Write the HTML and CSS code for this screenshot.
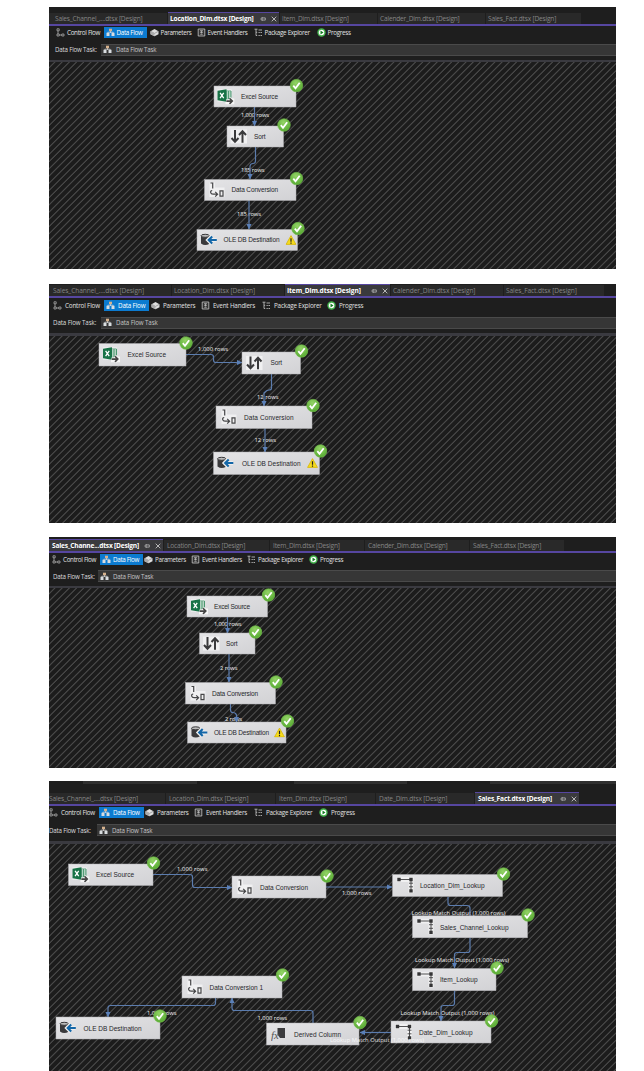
FILE: index.html
```html
<!DOCTYPE html>
<html lang="en">
<head>
<meta charset="utf-8">
<title>Data Flow designer</title>
<link rel="stylesheet" href="styles.css">
</head>
<body>
<svg class="defs" width="0" height="0" aria-hidden="true">
  <defs>
    <linearGradient id="face" x1="0" y1="0" x2="1" y2="1"><stop offset="0" stop-color="#e4e4e6"/><stop offset="1" stop-color="#d2d2d5"/></linearGradient>
    <radialGradient id="green" cx=".45" cy=".3" r=".75"><stop offset="0" stop-color="#93d366"/><stop offset="1" stop-color="#52a72f"/></radialGradient>
    <marker id="arrow" viewBox="0 0 6 6" refX="5.5" refY="3" markerWidth="5.5" markerHeight="5.5" markerUnits="userSpaceOnUse" orient="auto"><path d="M0 0.2L6 3L0 5.8z" fill="#5b80b8"/></marker>
    <symbol id="ok" viewBox="-7 -7 14 14"><circle r="6.3" fill="url(#green)" stroke="#74bd4c" stroke-width=".6"/><path d="M-3.200 .2L-1 2.8L3.200 -2.800" fill="none" stroke="#fff" stroke-width="1.8"/></symbol>
    <symbol id="warn" viewBox="0 0 10 9"><path d="M5 .5L9.5 8.5H.5z" fill="#f6dc1d" stroke="#d5b400" stroke-width=".7" stroke-linejoin="round"/><path d="M5 3v3M5 6.8v1" stroke="#222" stroke-width="1.1"/></symbol>
    <symbol id="excel" viewBox="0 0 18 16"><path d="M1 1h14v9h3v6H9v-3H1z" fill="#f6f6f6"/><path d="M9.5 2.5h5v8h-5z" fill="#fff" stroke="#2a8455" stroke-width=".8"/><path d="M9.5 4.5h5M9.5 6.5h5M9.5 8.5h5M12 2.5v8" stroke="#2a8455" stroke-width=".7"/><path d="M1 2.3L10 .8v12.4L1 11.8z" fill="#187347"/><path d="M3.6 4.3l3.6 5.4M7.2 4.3L3.6 9.7" stroke="#fff" stroke-width="1.3"/><path d="M9.5 12.6h6M13 9.8l2.8 2.8L13 15.4" stroke="#f6f6f6" stroke-width="3.4" fill="none"/><path d="M9.8 12.6h6M13 9.8l2.8 2.8L13 15.4" stroke="#444" stroke-width="1.6" fill="none"/></symbol>
    <symbol id="sort" viewBox="0 0 18 16"><path d="M.5 1h16.500v14H.5z" fill="#f0f0f1"/><path d="M5 1.500v11.500M1.500 9.500L5 13.200l3.500-3.700M12.500 14.300V3.200M9 6.500l3.500-3.700 3.500 3.700" stroke="#3a3a3c" stroke-width="2" fill="none"/></symbol>
    <symbol id="convert" viewBox="0 0 18 16"><path d="M.5 1H6v5h9.500v9.500H.5z" fill="#f0f0f1"/><path d="M1.500 1.500h2.200v5.500M3.200 9Q1.300 9.300 1.700 11.200Q2 12.700 4 12.700H8M6.200 10.300l2.400 2.400-2.400 2.400M11 9.300h3v5.400h-3z" stroke="#454547" stroke-width="1.200" fill="none"/></symbol>
    <symbol id="oledb" viewBox="0 0 18 16"><path d="M1 4.500v7.500Q5 15 9.500 12.300V4.500z" fill="#39393b"/><ellipse cx="5.200" cy="4.300" rx="4.200" ry="1.500" fill="#bbb" stroke="#39393b" stroke-width="1"/><path d="M7 8.500h9.500M12 4.700L8.200 8.500l3.800 3.800" stroke="#eee" stroke-width="4" fill="none"/><path d="M9 8.500h7.800M12.200 5L8.700 8.500l3.500 3.500" stroke="#1467a8" stroke-width="2.100" fill="none"/></symbol>
    <symbol id="lookup" viewBox="0 0 18 16"><path d="M0 0h17v16h-5V5H0z" fill="#f0f0f1"/><path d="M2 2.500h12.500v11.500M12.500 6.200h4M12.500 9.800h4" stroke="#404042" stroke-width=".9" fill="none"/><path d="M.8.8h3.400v3.400H.8zM12.800.8h3.400v3.400h-3.400zM12.800 12.200h3.400v3.400h-3.400z" fill="#343436"/></symbol>
    <symbol id="derived" viewBox="0 0 18 16"><path d="M6.500 1.500h7.500v10H9L6.500 8z" fill="#3c3c3e"/><text x="0" y="12" class="fx">fx</text></symbol>
    <symbol id="i-control" viewBox="0 0 9 9"><path d="M1 .8h2.200v2H1zM1 6h2.200v2H1zM5.800 6H8v2H5.800zM2 2.800V6M3.200 7h2.600" stroke="#b8b8b8" stroke-width=".7" fill="none"/></symbol>
    <symbol id="i-flow" viewBox="0 0 9 9"><path d="M4.500 2.500v2.500M1.800 6V4.200h5.400V6" stroke="#ddd" stroke-width=".7" fill="none"/><path d="M3 .7h3v2.500H3z" fill="#d7b28d"/><path d="M.5 4.800h3v3.200h-3zM5.500 4.800h3v3.200h-3z" fill="#d8dcdf"/></symbol>
    <symbol id="i-param" viewBox="0 0 9 9"><path d="M.5 3.200L4.500 1l4 2.200v3L4.500 8.300l-4-2.100z" fill="#dedede"/><path d="M.8 3.400l3.700 2 3.700-2" stroke="#777" stroke-width=".6" fill="none"/><path d="M4.500 5.400v2.900l-4-2.100v-3z" fill="#aaa"/></symbol>
    <symbol id="i-event" viewBox="0 0 9 9"><path d="M1.200 1h6.600v7H1.200z" fill="#333" stroke="#c8c8c8" stroke-width=".8"/><path d="M3 2.700h3M4.500 2.700v2.800M3 4.300h3M3.300 6.300h2.400" stroke="#c8c8c8" stroke-width=".7"/></symbol>
    <symbol id="i-package" viewBox="0 0 9 9"><path d="M.5 1.200h3M2 1.200v6.300h1.200M2 4.300h1.200M4.500 2h3.500M4.500 4.500h1.300M6.500 4.500H8M4.500 7.500h1.300M6.500 7.500H8" stroke="#b8b8b8" stroke-width=".9" fill="none"/></symbol>
    <symbol id="i-progress" viewBox="0 0 9 9"><circle cx="4.500" cy="4.500" r="3.500" fill="#fff" stroke="#43b34c" stroke-width="1.400"/><path d="M3.500 2.600L6.500 4.500l-3 1.900z" fill="#177c24"/></symbol>
    <symbol id="i-pin" viewBox="0 0 6 6"><path d="M.3 3h1.600M2 1v4M2 1.900h3.300v2.200H2" stroke="#c9c9c9" stroke-width=".7" fill="none"/></symbol>
    <symbol id="i-close" viewBox="0 0 6 6"><path d="M.7.7l4.600 4.600M5.300.7L.7 5.300" stroke="#d6d6d6" stroke-width=".8"/></symbol>
  </defs>
</svg>
<main class="page">

<section class="panel location">
  <nav class="tabs">
    <div class="tab">Sales_Channel_....dtsx [Design]</div>
    <div class="tab active"><span>Location_Dim.dtsx [Design]</span><svg><use href="#i-pin"/></svg><svg><use href="#i-close"/></svg></div>
    <div class="tab">Item_Dim.dtsx [Design]</div>
    <div class="tab">Calender_Dim.dtsx [Design]</div>
    <div class="tab">Sales_Fact.dtsx [Design]</div>
  </nav>
  <div class="toolbar">
    <div class="tool"><svg><use href="#i-control"/></svg>Control Flow</div>
    <div class="tool on"><svg><use href="#i-flow"/></svg>Data Flow</div>
    <div class="tool"><svg><use href="#i-param"/></svg>Parameters</div>
    <div class="tool"><svg><use href="#i-event"/></svg>Event Handlers</div>
    <div class="tool"><svg><use href="#i-package"/></svg>Package Explorer</div>
    <div class="tool"><svg><use href="#i-progress"/></svg>Progress</div>
  </div>
  <div class="task"><label>Data Flow Task:</label><div class="field"><svg><use href="#i-flow"/></svg>Data Flow Task</div></div>
  <div class="sep"></div>
  <svg class="canvas" viewBox="49 62 567 207">
    <g class="names">
      <text x="241" y="117.300" textLength="28">1,000 rows</text>
      <text x="241" y="171.800" textLength="23.500">185 rows</text>
      <text x="237" y="215.600" textLength="24">185 rows</text>
    </g>
    <g class="edges">
      <path d="M254.500 107V126"/><path d="M255.500 147V161Q255.500 163.500 253 163.500T250 166V179"/><path d="M249 200V229"/>
    </g>
    <g class="boxes">
      <rect x="214" y="86" width="82" height="21"/><rect x="227" y="126" width="56.500" height="21"/><rect x="204.500" y="179.500" width="91.500" height="21"/><rect x="197" y="229.500" width="100.500" height="21"/>
    </g>
    <g class="titles">
      <text x="241" y="99" textLength="37">Excel Source</text><text x="254" y="139" textLength="11.500">Sort</text><text x="231.500" y="192.300" textLength="46.500">Data Conversion</text><text x="223.500" y="242.300" textLength="56">OLE DB Destination</text>
    </g>
    <use href="#excel" x="216.500" y="88.500" width="18" height="16"/><use href="#sort" x="230" y="128.500" width="18" height="16"/><use href="#convert" x="209" y="181.500" width="18" height="16"/><use href="#oledb" x="200" y="231.500" width="18" height="16"/><use href="#warn" x="285.500" y="235" width="11" height="10"/>
    <use href="#ok" x="289.500" y="78.500" width="14" height="14"/><use href="#ok" x="277" y="118" width="14" height="14"/><use href="#ok" x="289.500" y="171.500" width="14" height="14"/><use href="#ok" x="291" y="221.500" width="14" height="14"/>
  </svg>
</section>

<section class="panel item">
  <nav class="tabs">
    <div class="tab">Sales_Channel_....dtsx [Design]</div>
    <div class="tab">Location_Dim.dtsx [Design]</div>
    <div class="tab active"><span>Item_Dim.dtsx [Design]</span><svg><use href="#i-pin"/></svg><svg><use href="#i-close"/></svg></div>
    <div class="tab">Calender_Dim.dtsx [Design]</div>
    <div class="tab">Sales_Fact.dtsx [Design]</div>
  </nav>
  <div class="toolbar">
    <div class="tool"><svg><use href="#i-control"/></svg>Control Flow</div>
    <div class="tool on"><svg><use href="#i-flow"/></svg>Data Flow</div>
    <div class="tool"><svg><use href="#i-param"/></svg>Parameters</div>
    <div class="tool"><svg><use href="#i-event"/></svg>Event Handlers</div>
    <div class="tool"><svg><use href="#i-package"/></svg>Package Explorer</div>
    <div class="tool"><svg><use href="#i-progress"/></svg>Progress</div>
  </div>
  <div class="task"><label>Data Flow Task:</label><div class="field"><svg><use href="#i-flow"/></svg>Data Flow Task</div></div>
  <div class="sep"></div>
  <svg class="canvas" viewBox="49 336 567 187">
    <g class="names">
      <text x="198" y="351.300" textLength="30">1,000 rows</text><text x="257" y="398.800" textLength="21.500">12 rows</text><text x="254.500" y="441.500" textLength="21.500">12 rows</text>
    </g>
    <g class="edges">
      <path d="M186 354.500H211Q213.500 354.500 213.500 357V360Q213.500 362.500 216 362.500H242"/><path d="M271.500 373V388Q271.500 390 269 390T264 393V406"/><path d="M265 428V452"/>
    </g>
    <g class="boxes">
      <rect x="99" y="343.500" width="87" height="22.500"/><rect x="242" y="352" width="58.500" height="22"/><rect x="216" y="406" width="96" height="22.500"/><rect x="213.500" y="452" width="106" height="22.500"/>
    </g>
    <g class="titles">
      <text x="127.500" y="357" textLength="38.500">Excel Source</text><text x="270.500" y="365.300" textLength="11.500">Sort</text><text x="244" y="419.800" textLength="49.500">Data Conversion</text><text x="242" y="465.800" textLength="58.500">OLE DB Destination</text>
    </g>
    <use href="#excel" x="102" y="346.500" width="18" height="16"/><use href="#sort" x="245.500" y="355" width="18" height="16"/><use href="#convert" x="221" y="408.500" width="18" height="16"/><use href="#oledb" x="216.500" y="454.500" width="18" height="16"/><use href="#warn" x="307" y="458" width="11" height="10"/>
    <use href="#ok" x="179" y="336" width="14" height="14"/><use href="#ok" x="294.500" y="344" width="14" height="14"/><use href="#ok" x="306" y="398.500" width="14" height="14"/><use href="#ok" x="313.500" y="444" width="14" height="14"/>
  </svg>
</section>

<section class="panel channel">
  <nav class="tabs">
    <div class="tab active"><span>Sales_Channe...dtsx [Design]</span><svg><use href="#i-pin"/></svg><svg><use href="#i-close"/></svg></div>
    <div class="tab">Location_Dim.dtsx [Design]</div>
    <div class="tab">Item_Dim.dtsx [Design]</div>
    <div class="tab">Calender_Dim.dtsx [Design]</div>
    <div class="tab">Sales_Fact.dtsx [Design]</div>
  </nav>
  <div class="toolbar">
    <div class="tool"><svg><use href="#i-control"/></svg>Control Flow</div>
    <div class="tool on"><svg><use href="#i-flow"/></svg>Data Flow</div>
    <div class="tool"><svg><use href="#i-param"/></svg>Parameters</div>
    <div class="tool"><svg><use href="#i-event"/></svg>Event Handlers</div>
    <div class="tool"><svg><use href="#i-package"/></svg>Package Explorer</div>
    <div class="tool"><svg><use href="#i-progress"/></svg>Progress</div>
  </div>
  <div class="task"><label>Data Flow Task:</label><div class="field"><svg><use href="#i-flow"/></svg>Data Flow Task</div></div>
  <div class="sep"></div>
  <svg class="canvas" viewBox="49 588 567 180">
    <g class="names">
      <text x="214" y="625.600" textLength="27.500">1,000 rows</text><text x="220" y="669.500" textLength="17.500">2 rows</text><text x="225" y="721.300" textLength="17">2 rows</text>
    </g>
    <g class="edges">
      <path d="M227.500 617V633"/><path d="M229 654V682"/><path d="M230.500 704V710Q230.500 712.500 233 712.500T236.500 715V722"/>
    </g>
    <g class="boxes">
      <rect x="187" y="596" width="80.500" height="21"/><rect x="199.500" y="633" width="55.500" height="21"/><rect x="185.500" y="682.500" width="90" height="21.500"/><rect x="187.500" y="722" width="98.500" height="21"/>
    </g>
    <g class="titles">
      <text x="214" y="608.800" textLength="36">Excel Source</text><text x="226" y="646" textLength="11.500">Sort</text><text x="212" y="695.800" textLength="46">Data Conversion</text><text x="214" y="735" textLength="55">OLE DB Destination</text>
    </g>
    <use href="#excel" x="190" y="598.500" width="18" height="16"/><use href="#sort" x="202.500" y="635.500" width="18" height="16"/><use href="#convert" x="190" y="685" width="18" height="16"/><use href="#oledb" x="190.500" y="724" width="18" height="16"/><use href="#warn" x="274" y="727.500" width="11" height="10"/>
    <use href="#ok" x="261.500" y="588" width="14" height="14"/><use href="#ok" x="248.500" y="625" width="14" height="14"/><use href="#ok" x="269" y="675" width="14" height="14"/><use href="#ok" x="280.500" y="714" width="14" height="14"/>
  </svg>
</section>

<section class="panel fact">
  <nav class="tabs">
    <div class="tab">Sales_Channel_....dtsx [Design]</div>
    <div class="tab">Location_Dim.dtsx [Design]</div>
    <div class="tab">Item_Dim.dtsx [Design]</div>
    <div class="tab">Date_Dim.dtsx [Design]</div>
    <div class="tab active"><span>Sales_Fact.dtsx [Design]</span><svg><use href="#i-pin"/></svg><svg><use href="#i-close"/></svg></div>
  </nav>
  <div class="toolbar">
    <div class="tool"><svg><use href="#i-control"/></svg>Control Flow</div>
    <div class="tool on"><svg><use href="#i-flow"/></svg>Data Flow</div>
    <div class="tool"><svg><use href="#i-param"/></svg>Parameters</div>
    <div class="tool"><svg><use href="#i-event"/></svg>Event Handlers</div>
    <div class="tool"><svg><use href="#i-package"/></svg>Package Explorer</div>
    <div class="tool"><svg><use href="#i-progress"/></svg>Progress</div>
  </div>
  <div class="task"><label>Data Flow Task:</label><div class="field"><svg><use href="#i-flow"/></svg>Data Flow Task</div></div>
  <div class="sep"></div>
  <svg class="canvas" viewBox="49 844 567 227">
    <g class="names">
      <text x="177" y="871.300" textLength="30.500">1,000 rows</text><text x="342" y="895.300" textLength="29.500">1,000 rows</text>
      <text x="411.500" y="914.500" textLength="94">Lookup Match Output (1,000 rows)</text><text x="415" y="961.500" textLength="94">Lookup Match Output (1,000 rows)</text><text x="400.500" y="1014.500" textLength="94">Lookup Match Output (1,000 rows)</text>
      <text x="257.500" y="1019.500" textLength="29.500">1,000 rows</text><text x="147" y="1014.500" textLength="29.500">1,000 rows</text>
    </g>
    <g class="edges">
      <path d="M153 874.500H190Q192.500 874.500 192.500 877V885Q192.500 887.500 195 887.500H232"/><path d="M326 887H392"/>
      <path class="plain" d="M448 897V903Q448 905.500 450.500 905.500H467Q470 905.500 470 908V916"/><path d="M470 938V950Q470 952.500 467.500 952.500H457Q454.500 952.500 454.500 955V968"/>
      <path d="M454.500 991V1003Q454.500 1005.500 452 1005.500H443.500Q441 1005.500 441 1008V1021"/><path d="M391 1032.500H360"/>
      <path d="M313 1023V1013Q313 1010.500 310.500 1010.500H234.500Q232 1010.500 232 1008V998"/><path d="M215.500 998V1003Q215.500 1005.500 213 1005.500H110.500Q108 1005.500 108 1008V1017"/>
    </g>
    <g class="boxes">
      <rect x="68.500" y="864" width="84.500" height="21.500"/><rect x="232" y="876" width="94" height="22"/><rect x="392.500" y="874.500" width="110" height="22"/><rect x="412.500" y="915.800" width="115" height="22"/><rect x="412.500" y="968.500" width="83.500" height="22.200"/><rect x="391" y="1021" width="100" height="22"/><rect x="266.500" y="1023" width="92.500" height="22"/><rect x="182" y="976" width="100" height="22"/><rect x="56" y="1017" width="104" height="22"/>
    </g>
    <g class="titles">
      <text x="96" y="877" textLength="38">Excel Source</text><text x="260" y="889.800" textLength="48">Data Conversion</text><text x="420" y="887.500" textLength="64.500">Location_Dim_Lookup</text><text x="440" y="929.500" textLength="68.500">Sales_Channel_Lookup</text><text x="440" y="982.300" textLength="37.500">Item_Lookup</text><text x="419" y="1034.500" textLength="53.500">Date_Dim_Lookup</text><text x="294" y="1036.500" textLength="47">Derived Column</text><text x="209.500" y="989.500" textLength="53.500">Data Conversion 1</text><text x="83.500" y="1030.500" textLength="58">OLE DB Destination</text>
    </g>
    <use href="#excel" x="71.500" y="866.500" width="18" height="16"/><use href="#convert" x="237" y="878.500" width="18" height="16"/><use href="#lookup" x="396.500" y="877" width="18" height="16"/><use href="#lookup" x="416.500" y="918.500" width="18" height="16"/><use href="#lookup" x="416.500" y="971.500" width="18" height="16"/><use href="#lookup" x="395" y="1024" width="18" height="16"/><use href="#derived" x="271" y="1026.500" width="18" height="16"/><use href="#convert" x="187" y="978.500" width="18" height="16"/><use href="#oledb" x="59" y="1019.500" width="18" height="16"/>
    <g class="names over"><text x="330" y="1041.500" textLength="94">Lookup Match Output (1,000 rows)</text></g>
    <use href="#ok" x="146.500" y="856" width="14" height="14"/><use href="#ok" x="320" y="869" width="14" height="14"/><use href="#ok" x="496.500" y="867" width="14" height="14"/><use href="#ok" x="521" y="908" width="14" height="14"/><use href="#ok" x="490" y="961" width="14" height="14"/><use href="#ok" x="484.500" y="1014" width="14" height="14"/><use href="#ok" x="353" y="1015.500" width="14" height="14"/><use href="#ok" x="275.500" y="968" width="14" height="14"/><use href="#ok" x="153" y="1009" width="14" height="14"/>
  </svg>
</section>
</main>
</body>
</html>
```
FILE: styles.css
```css
* { box-sizing: border-box; }
body { margin: 0; background: #fff; font-family: "Open Sans", "Noto Sans", sans-serif; }
.defs { position: absolute; }
.page { width: 644px; height: 1071px; overflow: hidden; padding: 7px 28px 0 49px; }
.panel { display: grid; width: 567px; background: #1e1e1e; overflow: hidden; }
.location { grid-template-rows: 19px 13px 21px 2px 207px; margin-bottom: 15px; }
.item { grid-template-rows: 14px 14px 21px 3px 187px; margin-bottom: 14px; }
.channel { grid-template-rows: 16px 13px 20px 2px 180px; margin-bottom: 13px; }
.fact { grid-template-rows: 25px 13px 22px 3px 227px; }

.tabs { display: grid; align-items: end; border-bottom: 2px solid #5646a0; column-gap: 1px; }
.location .tabs { grid-template-columns: 118px 111px 97px 107px 95px; --tab-pad: 2px; }
.item .tabs { grid-template-columns: 122px 112px 105px 112px 100px; --tab-pad: 2px; }
.channel .tabs { grid-template-columns: 114px 105px 94px 104px 94px; --tab-pad: 3px; }
.fact .tabs { grid-template-columns: 116px 109px 99px 98px 104px; --tab-pad: 3px; }
.fact .tabs {
  background: linear-gradient(90deg, transparent 34px, #303030 34px, #303030 148px, transparent 148px, transparent 245px, #303030 245px, #303030 358px, transparent 358px, transparent 441px, #303030 441px) 0 0 / 100% 3px no-repeat;
}
.tab { display: flex; align-items: center; height: 11px; padding-left: var(--tab-pad); background: #292929; color: #858585; font-size: 6.6px; letter-spacing: -0.2px; line-height: 11px; white-space: nowrap; }
.location .tab:first-child { padding-left: 6px; }
.item .tab:first-child { padding-left: 4px; }
.fact .tab:first-child { padding-left: 0; }
.item .tab { letter-spacing: -0.09px; }
.fact .tab { letter-spacing: -0.15px; }
.tab.active { height: 12px; padding-right: 2px; background: #3a3a3d; border-top: 1px solid #5646a0; color: #fff; font-weight: 700; }
.tab span { flex: 1; }
.tab svg { width: 6px; height: 6px; margin-left: 5px; flex: none; }

.toolbar { display: grid; align-items: center; }
.location .toolbar { grid-template-columns: 47.5px 46px 47px 57px 63px 60px; padding-left: 7px; }
.item .toolbar { grid-template-columns: 51px 47px 50px 61px 65px 60px; padding-left: 4px; }
.channel .toolbar { grid-template-columns: 48px 44px 47px 56px 62px 60px; padding-left: 3px; }
.fact .toolbar { grid-template-columns: 50px 46px 49px 60px 65px 60px; padding-left: 0; }
.tool { display: flex; align-items: center; justify-self: start; gap: 2px; height: 11px; color: #e0e0e0; font-size: 6.3px; letter-spacing: -0.32px; line-height: 11px; white-space: nowrap; }
.tool svg, .field svg { width: 9px; height: 9px; flex: none; }
.tool.on { width: 43px; padding-left: 2px; background: #0c7bd0; color: #fff; }
.item .tool.on, .fact .tool.on { width: 45px; }
.item .tool { gap: 3px; letter-spacing: -0.17px; }
.fact .tool { gap: 3px; letter-spacing: -0.25px; }

.task { display: flex; align-items: center; color: #dcdcdc; font-size: 6.2px; letter-spacing: -0.2px; white-space: nowrap; }
.task label { width: 52px; padding-left: 6px; flex: none; }
.item .task label { padding-left: 4px; }
.channel .task label { width: 49px; padding-left: 4px; }
.fact .task label { width: 48px; padding-left: 0; }
.field { display: flex; flex: 1; align-items: center; gap: 4px; height: 12px; padding-left: 2px; background: #363636; border: solid #4a4a4a; border-width: 1px 0; color: #c4c4c4; }
.item .task { letter-spacing: -0.1px; }
.sep { background: #3a3a40; }

.canvas { display: block; width: 567px; height: 100%; background: repeating-linear-gradient(135deg, #1c1c1c 0 3.2px, #484848 4px 4.4px, #1c1c1c 5.1px); }
.boxes rect { fill: url(#face); stroke: #aeaeb2; stroke-width: .5; }
.edges path { fill: none; stroke: #5b7cae; stroke-width: 1.2; marker-end: url(#arrow); }
.edges .plain { marker-end: none; }
.names text { font: 500 5.8px "Open Sans", "Noto Sans", sans-serif; fill: #f2f2f2; }
.titles text { font: 6.500px "Liberation Sans", Arial, sans-serif; fill: #27272b; }
.over text { fill: #fff; opacity: .85; }
.fx { font: italic 11px "Liberation Serif", serif; fill: #555; }
```
